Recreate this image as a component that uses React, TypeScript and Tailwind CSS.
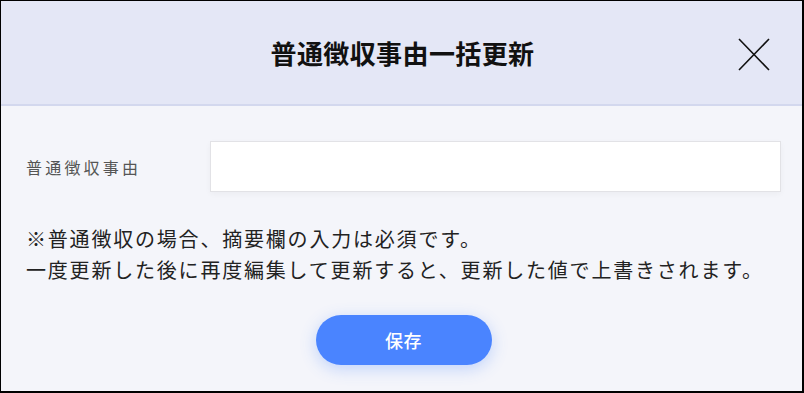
export default function App() {
  return (
    <div
      className="w-[804px] h-[393px] border-l border-t border-r-2 border-b-2 border-black bg-[#f4f5fa] flex flex-col overflow-hidden"
      style={{ fontFamily: '"Noto Sans CJK JP", "Noto Sans", sans-serif' }}
    >
      {/* ヘッダー */}
      <div className="relative h-[105px] shrink-0 bg-[#e4e7f6] border-b-2 border-[#d3d8ee] flex items-center justify-center">
        <h2 className="text-[26px] font-bold tracking-[0.4px] text-[#111] leading-none pl-[2px]">
          普通徴収事由一括更新
        </h2>
        <button type="button" className="absolute left-[736px] top-[36px] w-[34px] h-[34px] flex items-center justify-center">
          <svg width="32" height="33" viewBox="0 0 32 33" fill="none">
            <path d="M1 1 L31 32 M31 1 L1 32" stroke="#111" strokeWidth="1.6" />
          </svg>
        </button>
      </div>

      {/* 本文 */}
      <div className="flex-1 pl-[25px] pr-[21px] pt-[35px]">
        <div className="flex items-center">
          <label className="w-[184px] shrink-0 text-[16px] tracking-[3.2px] text-[#555]">
            普通徴収事由
          </label>
          <input
            type="text"
            className="flex-1 h-[51px] bg-white border border-[#e2e2e6] shadow-[0_2px_6px_rgba(0,0,0,0.04)] outline-none px-3"
          />
        </div>

        <div className="mt-[31px] text-[20px] leading-[31px] tracking-[1.8px] text-[#222]">
          <p>※普通徴収の場合、摘要欄の入力は必須です。</p>
          <p>一度更新した後に再度編集して更新すると、更新した値で上書きされます。</p>
        </div>

        <div className="mt-[30px] flex justify-center">
          <button
            type="button"
            className="w-[176px] h-[50px] rounded-full bg-[#4a84ff] text-white text-[18px] font-medium tracking-[0.5px] shadow-[0_4px_16px_rgba(74,132,255,0.3)]"
          >
            保存
          </button>
        </div>
      </div>
    </div>
  );
}
